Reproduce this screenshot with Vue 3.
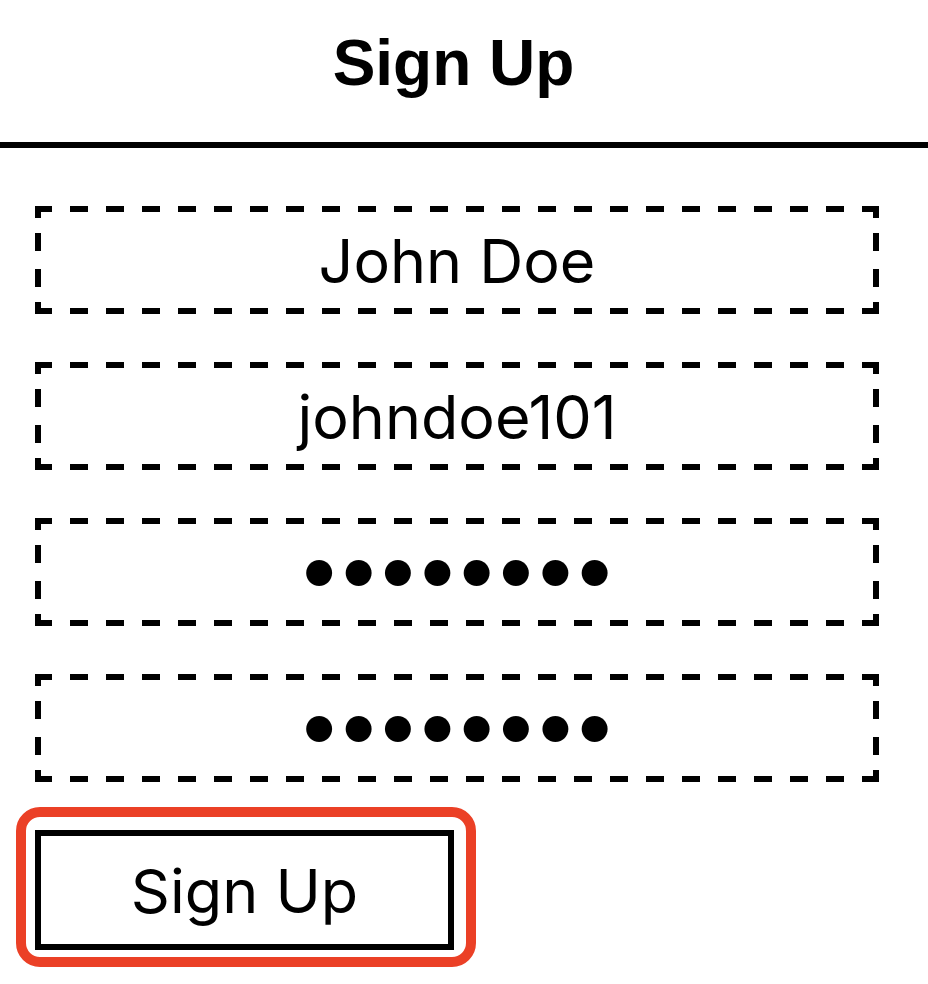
<script setup>
import { reactive } from 'vue'

const fields = reactive([
  { id: 'name', label: 'Name', type: 'text', value: 'John Doe', autocomplete: 'name' },
  { id: 'username', label: 'Username', type: 'text', value: 'johndoe101', autocomplete: 'username' },
  { id: 'password', label: 'Password', type: 'password', value: 'password', autocomplete: 'new-password' },
  { id: 'confirm', label: 'Confirm password', type: 'password', value: 'password', autocomplete: 'new-password' },
])
</script>

<template>
  <main class="page">
    <header class="header">
      <h1 class="title">Sign Up</h1>
    </header>
    <form class="form" @submit.prevent>
      <div class="fields">
        <input
          v-for="field in fields"
          :id="field.id"
          :key="field.id"
          v-model="field.value"
          class="field"
          :class="{ secret: field.type === 'password' }"
          :type="field.type"
          :aria-label="field.label"
          :autocomplete="field.autocomplete"
        />
      </div>
      <div class="ring">
        <button class="submit" type="submit">Sign Up</button>
      </div>
    </form>
  </main>
</template>

<style>
body {
  background: #fff;
}
</style>

<style scoped>
.page {
  color: #000;
  font-family: Inter, "Liberation Sans", sans-serif;
}

.header {
  padding: 27px 21px 43px 0;
  border-bottom: 6px solid #000;
  text-align: center;
}

.title {
  margin: 0;
  font-family: "Liberation Sans", Arial, sans-serif;
  font-size: 64px;
  font-weight: 700;
  line-height: 72px;
}

.form {
  padding: 58px 49px 17px 16px;
}

.fields {
  display: grid;
  gap: 48px;
  padding-left: 19px;
}

.field,
.submit {
  box-sizing: border-box;
  margin: 0;
  border-radius: 0;
  color: inherit;
  font: 400 61px/72px Inter, "Liberation Sans", sans-serif;
}

/* Long dashes along every edge, with a solid piece closing each corner. */
.field {
  --ink: linear-gradient(#000, #000);
  --dash-x: linear-gradient(90deg, #000 9px, transparent 9px 27px, #000 27px);
  --dash-y: linear-gradient(transparent 9px, #000 9px 27px, transparent 27px 45px, #000 45px 63px, transparent 63px);
  width: 100%;
  height: 108px;
  padding: 8px 8px 6px;
  border: 0;
  background:
    var(--ink) left top / 6px 12px no-repeat,
    var(--ink) right top / 6px 12px no-repeat,
    var(--ink) left bottom / 6px 12px no-repeat,
    var(--ink) right bottom / 6px 12px no-repeat,
    var(--dash-x) center top / 36px 6px repeat-x,
    var(--dash-x) center bottom / 36px 6px repeat-x,
    var(--dash-y) left center / 6px 72px no-repeat,
    var(--dash-y) right center / 6px 72px no-repeat;
  text-align: center;
}

/* The bold bullet is larger and rides higher, so the dots read clearly. */
.secret {
  padding: 0 8px 10px;
  font-size: 83px;
  font-weight: 700;
}

.ring {
  box-sizing: border-box;
  width: fit-content;
  margin-top: 25px;
  padding: 13px 12px 7px 9px;
  border: 10px solid #eb4026;
  border-radius: 24px;
}

.submit {
  display: block;
  min-width: 419px;
  height: 120px;
  padding: 2px 24px 0;
  border: 6px solid #000;
  background: #fff;
}
</style>
